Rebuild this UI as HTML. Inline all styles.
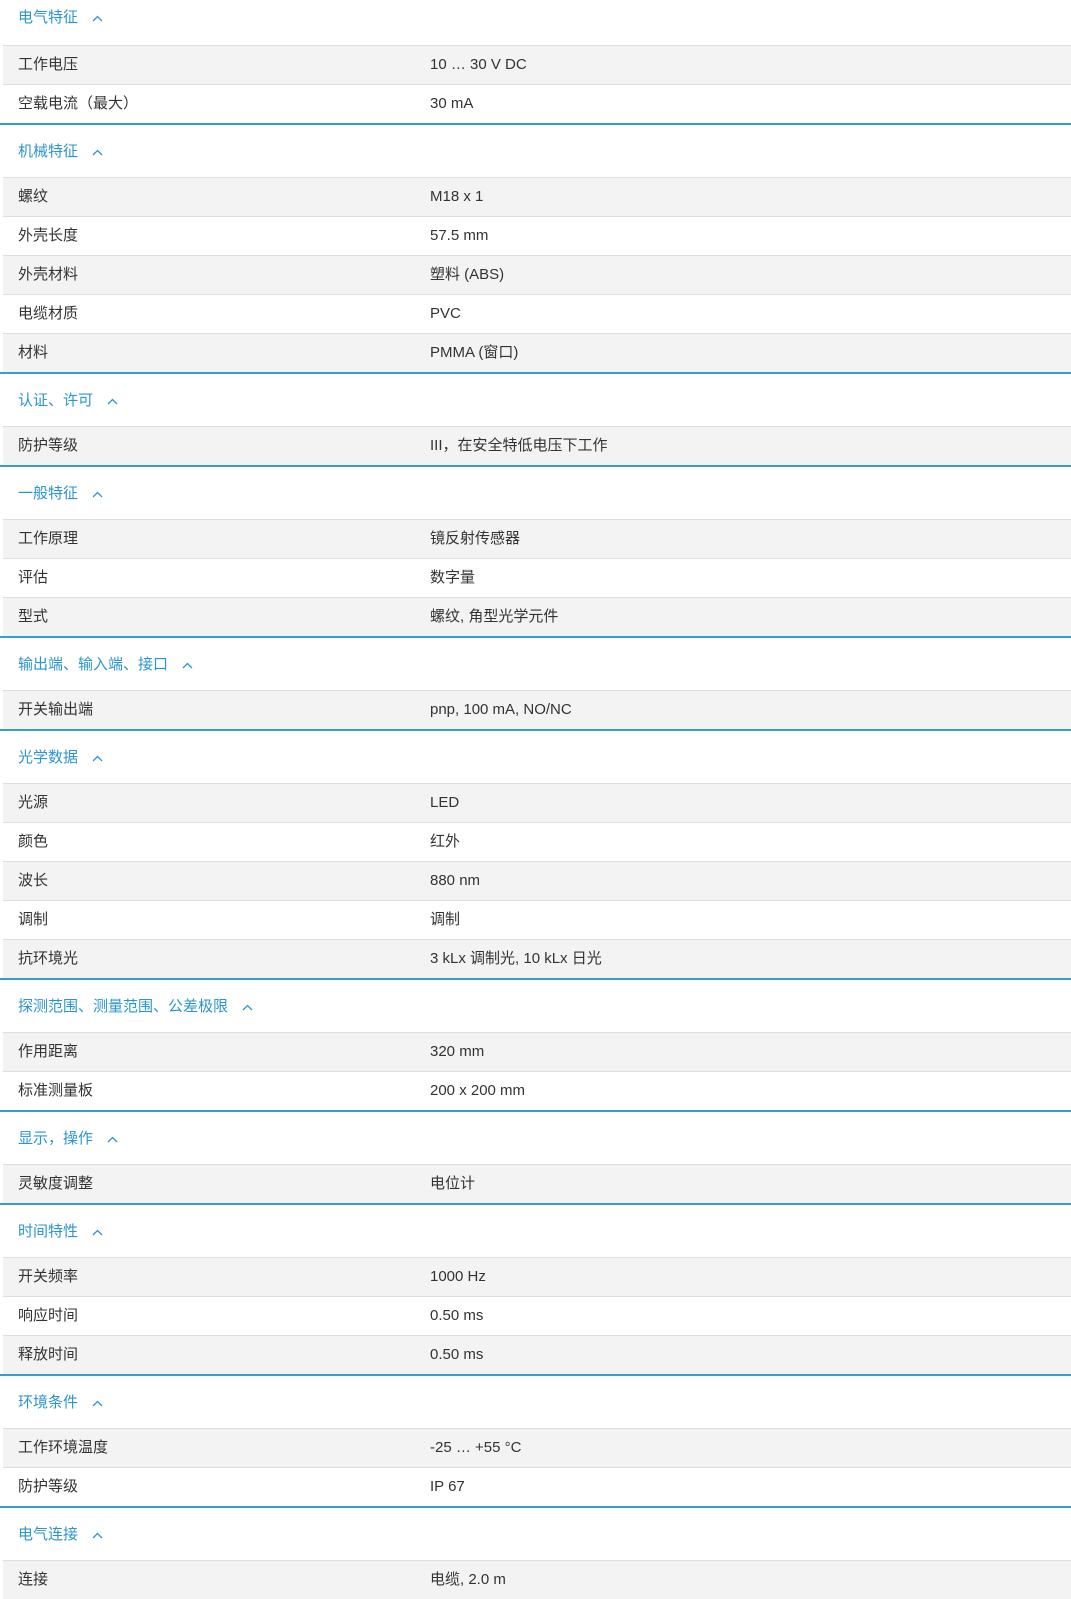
<!DOCTYPE html>
<html><head><meta charset="utf-8"><style>
body{margin:0;background:#fff;font-family:"Liberation Sans","Noto Sans CJK SC",sans-serif;font-size:15px;color:#333;width:1071px;overflow:hidden}
.h{height:53px;line-height:53px;padding-left:18px;color:#2b95cf;border-top:2px solid #3a9bd0;box-sizing:border-box;height:54px}
.h.first{border-top:none;height:45px;line-height:35px}
.h svg{margin-left:14px;vertical-align:middle}
.r{height:39px;border-top:1px solid #dedede;box-sizing:border-box;line-height:38px;margin-left:3px;position:relative}
.r:nth-child(even){background:#f3f3f3}
.r span{position:absolute;left:15px}
.r b{font-weight:normal;position:absolute;left:427px}
.s .r:first-of-type{background:#f3f3f3}
</style></head><body>
<div id="c"></div>
<script>
const d=[["电气特征",[["工作电压","10 … 30 V DC"],["空载电流（最大）","30 mA"]]],
["机械特征",[["螺纹","M18 x 1"],["外壳长度","57.5 mm"],["外壳材料","塑料 (ABS)"],["电缆材质","PVC"],["材料","PMMA (窗口)"]]],
["认证、许可",[["防护等级","III，在安全特低电压下工作"]]],
["一般特征",[["工作原理","镜反射传感器"],["评估","数字量"],["型式","螺纹, 角型光学元件"]]],
["输出端、输入端、接口",[["开关输出端","pnp, 100 mA, NO/NC"]]],
["光学数据",[["光源","LED"],["颜色","红外"],["波长","880 nm"],["调制","调制"],["抗环境光","3 kLx 调制光, 10 kLx 日光"]]],
["探测范围、测量范围、公差极限",[["作用距离","320 mm"],["标准测量板","200 x 200 mm"]]],
["显示，操作",[["灵敏度调整","电位计"]]],
["时间特性",[["开关频率","1000 Hz"],["响应时间","0.50 ms"],["释放时间","0.50 ms"]]],
["环境条件",[["工作环境温度","-25 … +55 °C"],["防护等级","IP 67"]]],
["电气连接",[["连接","电缆, 2.0 m"]]]];
let h="";
d.forEach((s,i)=>{h+='<div class="h'+(i==0?' first':'')+'">'+s[0]+'<svg width="11" height="7" viewBox="0 0 11 7"><path d="M1 6L5.5 1.5L10 6" fill="none" stroke="#2b95cf" stroke-width="1.3"/></svg></div>';
s[1].forEach((r,j)=>{h+='<div class="r" style="background:'+(j%2==0?'#f3f3f3':'#fff')+'"><span>'+r[0]+'</span><b>'+r[1]+'</b></div>';});});
document.getElementById("c").innerHTML=h;
</script>
</body></html>
